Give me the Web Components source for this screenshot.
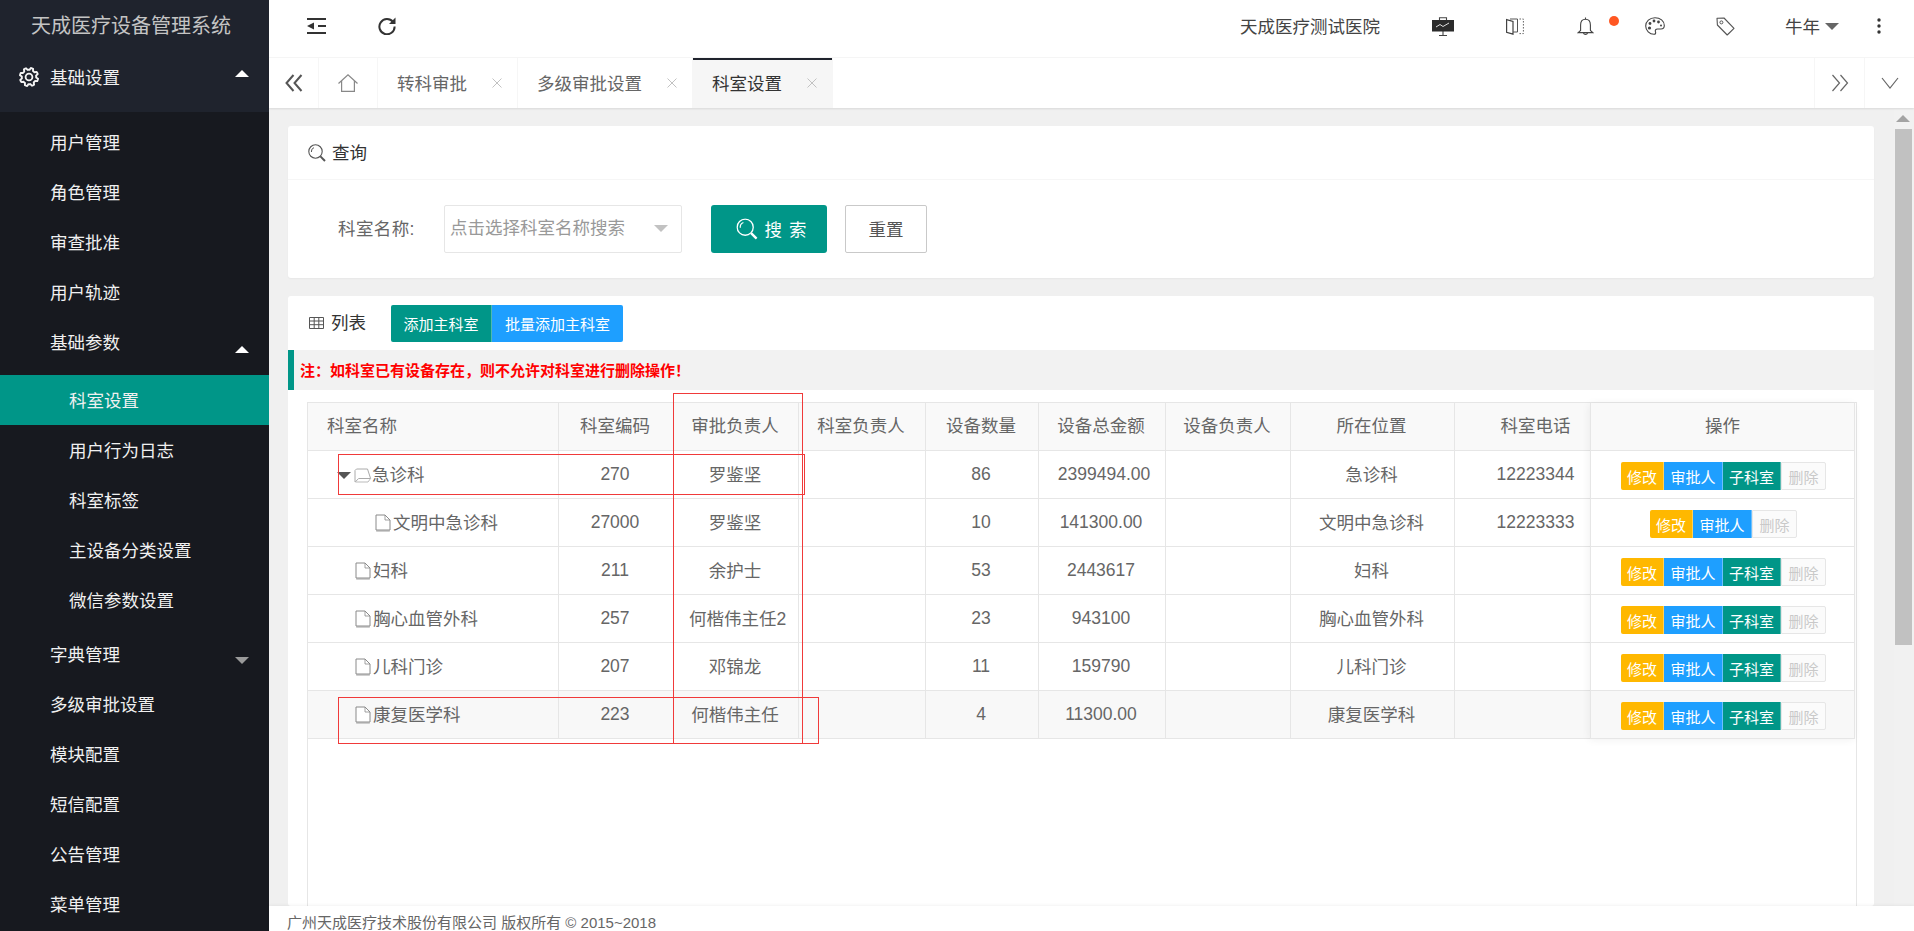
<!DOCTYPE html>
<html lang="zh-CN">
<head>
<meta charset="utf-8">
<title>科室设置</title>
<style>
html, body { margin: 0; height: 100%; overflow: hidden; }
body { font-family: "Liberation Sans", "Noto Sans CJK SC", sans-serif; font-size: 17.5px; color: #666; }
</style>
</head>
<body>
<tc-app>
  <side-nav slot="side">
    <nav-item group arrow="up" icon="gear">基础设置</nav-item>
    <nav-item>用户管理</nav-item>
    <nav-item>角色管理</nav-item>
    <nav-item>审查批准</nav-item>
    <nav-item>用户轨迹</nav-item>
    <nav-item arrow="up">基础参数</nav-item>
    <nav-item sub active>科室设置</nav-item>
    <nav-item sub>用户行为日志</nav-item>
    <nav-item sub>科室标签</nav-item>
    <nav-item sub>主设备分类设置</nav-item>
    <nav-item sub last>微信参数设置</nav-item>
    <nav-item arrow="down">字典管理</nav-item>
    <nav-item>多级审批设置</nav-item>
    <nav-item>模块配置</nav-item>
    <nav-item>短信配置</nav-item>
    <nav-item>公告管理</nav-item>
    <nav-item>菜单管理</nav-item>
  </side-nav>
  <top-bar slot="top"></top-bar>
  <tab-strip slot="tabs">
    <tab-item>转科审批</tab-item>
    <tab-item>多级审批设置</tab-item>
    <tab-item active>科室设置</tab-item>
  </tab-strip>
  <query-card></query-card>
  <list-card>
    <dept-table></dept-table>
  </list-card>
  <page-footer slot="foot">广州天成医疗技术股份有限公司 版权所有 © 2015~2018</page-footer>
</tc-app>

<script>
// 齿轮图标的轮廓，8 个齿
function gearPath() {
  let d = '';
  for (let i = 0; i < 48; i++) {
    const a = i / 48 * Math.PI * 2;
    const tooth = (i % 6) < 3;
    const r = tooth ? 9.2 : 7.2;
    d += (i ? 'L' : 'M') + (10 + r * Math.cos(a + 0.2)).toFixed(2) + ' ' + (10 + r * Math.sin(a + 0.2)).toFixed(2);
  }
  return d + 'Z';
}

const ICONS = {
  shrink: [19, 16, `<path d="M0 1H19M11 8H19M0 15H19" stroke="#333" stroke-width="2"/><path d="M0 8L7 4.5V11.5Z" fill="#333"/>`],
  refresh: [18, 18, `<path d="M15 5A7.6 7.6 0 1 0 16.6 9.6" fill="none" stroke="#333" stroke-width="2"/><path d="M17.5 .5V7H11Z" fill="#333"/>`],
  home: [20, 18, `<path d="M.5 9.5L10 .8L19.5 9.5M3.6 7V17.4H16.4V7" fill="none" stroke="#888" stroke-width="1.2"/>`],
  dleft: [18, 18, `<path d="M8.5 1L1.5 9L8.5 17M16.5 1L9.5 9L16.5 17" fill="none" stroke="#555" stroke-width="2"/>`],
  dright: [18, 18, `<path d="M1.5 1L8.5 9L1.5 17M9.5 1L16.5 9L9.5 17" fill="none" stroke="#666" stroke-width="1.2"/>`],
  down: [18, 12, `<path d="M1 1L9 11L17 1" fill="none" stroke="#666" stroke-width="1.2"/>`],
  close: [10, 10, `<path d="M.5 .5L9.5 9.5M9.5 .5L.5 9.5" stroke="#c2c2c2" stroke-width="1"/>`],
  search: [18, 18, `<circle cx="7.5" cy="7.5" r="6.7" fill="none" stroke="currentColor" stroke-width="1.1"/><path d="M12.4 12.4L17 17" stroke="currentColor" stroke-width="2"/><path d="M3.4 8A4.2 4.2 0 0 1 6 3.6" fill="none" stroke="currentColor" stroke-width="1"/>`],
  table: [15, 12, `<path d="M.5 .5H14.5V11.5H.5ZM.5 4H14.5M.5 7.7H14.5M5.2 .5V11.5M9.8 .5V11.5" fill="none" stroke="#555" stroke-width="1"/>`],
  board: [22, 19, `<path d="M7.5 3V.7H14.5V3M11 14V19M7 18.6H15" fill="none" stroke="#444" stroke-width="1.1"/><rect y="3" width="22" height="11.5" fill="#2b2b2b"/><path d="M4 10L8 7.5L11 9.5L17 6" fill="none" stroke="#ddd" stroke-width="1"/>`],
  book: [18, 17, `<path d="M.6 1.6L7 3.4V16.2L.6 14.4Z" fill="none" stroke="#444" stroke-width="1.2"/><path d="M4 1H11.5V14H7" fill="none" stroke="#555" stroke-width="1"/><path d="M13.5 1H17.4V15.6H12" fill="none" stroke="#555" stroke-width="1" stroke-dasharray="1.4 1.6"/>`],
  bell: [17, 19, `<path d="M8.5 2.2C5 2.2 3.6 4.6 3.6 8V13.5L1.2 15.6H15.8L13.4 13.5V8C13.4 4.6 12 2.2 8.5 2.2Z" fill="none" stroke="#444" stroke-width="1.1"/><path d="M8.5 .4V2.2M6.4 15.8A2.2 2.2 0 0 0 10.6 15.8" fill="none" stroke="#444" stroke-width="1.1"/>`],
  palette: [20, 18, `<path d="M10 .7C4.6 .7 .7 4.5 .7 9C.7 13.5 4.6 17.3 9 17.3C10.5 17.3 11 16.2 10.5 15C9.8 13.4 10.7 12 12.5 12H16C18 12 19.3 10.8 19.3 8.5C19.3 4 15.2 .7 10 .7Z" fill="none" stroke="#444" stroke-width="1.1"/><circle cx="5" cy="6.5" r="1.4" fill="#444"/><circle cx="9" cy="4" r="1.4" fill="#444"/><circle cx="13.5" cy="5" r="1.4" fill="#444"/><circle cx="4.5" cy="11" r="1.6" fill="#444"/><circle cx="16" cy="8.4" r="1" fill="#444"/>`],
  tag: [19, 19, `<path d="M1 1.3L8 1L18 11.3L11.2 18L1.4 8Z" fill="none" stroke="#555" stroke-width="1.1" stroke-linejoin="round"/><circle cx="5.4" cy="5.4" r="1.5" fill="none" stroke="#555"/>`],
  kebab: [4, 16, `<circle cx="2" cy="2" r="1.7" fill="#333"/><circle cx="2" cy="8" r="1.7" fill="#333"/><circle cx="2" cy="14" r="1.7" fill="#333"/>`],
  file: [16, 18, `<path d="M1.2 17H14.8" stroke="#bbb" stroke-width="1.4"/><path d="M1 1H10L15 6V16H1Z" fill="#fff" stroke="#8a8a8a"/><path d="M10 1V6H15" fill="none" stroke="#8a8a8a" stroke-width=".8"/>`],
  folder: [18, 15, `<path d="M1 14V2.5L2.5 1H13.5L16.6 10.5H4.6L1.2 14Z" fill="#fff" stroke="#aaa"/><path d="M1.6 14H14L16.6 10.5" fill="none" stroke="#bbb"/>`],
  gear: [20, 20, `<path d="${gearPath()}" fill="none" stroke="#f4f4f4" stroke-width="1.9" stroke-linejoin="round"/><circle cx="10" cy="10" r="3.4" fill="none" stroke="#f4f4f4" stroke-width="1.8"/>`]
};

class TcIcon extends HTMLElement {
  connectedCallback() {
    const [w, h, body] = ICONS[this.getAttribute('name')];
    this.attachShadow({ mode: 'open' });
    this.shadowRoot.innerHTML = `
      <style>:host { display: inline-flex; flex: none; width: ${w}px; height: ${h}px; } svg { display: block; }</style>
      <svg width="${w}" height="${h}" viewBox="0 0 ${w} ${h}">${body}</svg>`;
  }
}
customElements.define('tc-icon', TcIcon);

class TcApp extends HTMLElement {
  constructor() {
    super();
    this.attachShadow({ mode: 'open' });
    this.shadowRoot.innerHTML = `
      <style>
        :host { display: grid; grid-template-columns: 269px 1fr; height: 931px; overflow: hidden; }
        .main { display: flex; flex-direction: column; min-width: 0; height: 931px; }
        .body { flex: 1; min-height: 0; display: flex; background: #f0f0f0; }
        .pane { flex: 1; min-width: 0; display: flex; flex-direction: column; gap: 18px; padding: 18px 20px 0 19px; overflow: hidden; }
        .track { flex: none; width: 20px; background: #f1f1f1; }
        .arrow { height: 21px; display: flex; justify-content: center; align-items: center; padding-right: 2px; }
        .arrow i { border: 7px solid transparent; border-top: 0; border-bottom: 7px solid #a3a3a3; }
        .thumb { width: 17px; height: 516px; margin-left: 1px; background: #c1c1c1; }
      </style>
      <slot name="side"></slot>
      <div class="main">
        <slot name="top"></slot>
        <slot name="tabs"></slot>
        <div class="body">
          <div class="pane"><slot></slot></div>
          <div class="track"><div class="arrow"><i></i></div><div class="thumb"></div></div>
        </div>
        <slot name="foot"></slot>
      </div>`;
  }
}
customElements.define('tc-app', TcApp);

class SideNav extends HTMLElement {
  constructor() {
    super();
    this.attachShadow({ mode: 'open' });
    this.shadowRoot.innerHTML = `
      <style>
        :host { display: block; background: #17191f; height: 931px; overflow: hidden; }
        .logo { height: 57px; background: #1f232d; color: #c4c4c4; font-size: 20px; line-height: 53px; text-align: center; padding-right: 7px; box-sizing: border-box; }
      </style>
      <div class="logo">天成医疗设备管理系统</div>
      <slot></slot>`;
  }
}
customElements.define('side-nav', SideNav);

class NavItem extends HTMLElement {
  constructor() {
    super();
    this.attachShadow({ mode: 'open' });
    const arrow = this.getAttribute('arrow');
    const icon = this.getAttribute('icon');
    this.shadowRoot.innerHTML = `
      <style>
        :host { display: block; color: #f0f0f0; }
        :host([group]) { background: #1f232d; margin-bottom: 5px; }
        :host([arrow="up"]:not([group])) { margin-bottom: 8px; }
        :host([last]) { margin-bottom: 4px; }
        .row { height: 50px; box-sizing: border-box; display: flex; align-items: center; padding: 0 0 2px 50px; position: relative; }
        :host([group]) .row { height: 55px; padding: 0 0 17px 19px; gap: 11px; }
        :host([group]) tc-icon { margin-top: 2px; }
        :host([sub]) .row { padding-left: 69px; }
        :host([active]) .row { background: #009688; }
        .tri { position: absolute; left: 235px; border: 7.5px solid transparent; }
        .up { top: 29px; border-top: 0; border-bottom: 7.5px solid #fff; }
        :host([group]) .up { top: 13px; }
        .down { top: 28px; border-bottom: 0; border-top: 7.5px solid #9a9a9a; }
      </style>
      <div class="row">
        ${icon ? `<tc-icon name="${icon}"></tc-icon>` : ''}
        <slot></slot>
        ${arrow ? `<i class="tri ${arrow}"></i>` : ''}
      </div>`;
  }
}
customElements.define('nav-item', NavItem);

class TopBar extends HTMLElement {
  constructor() {
    super();
    this.attachShadow({ mode: 'open' });
    this.shadowRoot.innerHTML = `
      <style>
        :host { display: flex; align-items: center; background: #fff; border-bottom: 1px solid #f6f6f6; color: #444; flex: none; padding-bottom: 5px; height: 52px; }
        .spacer { flex: 1; }
        span { padding-bottom: 2px; }
        .bell { position: relative; display: flex; }
        .dot { position: absolute; left: 32px; top: -1px; width: 10px; height: 10px; border-radius: 50%; background: #ff5722; }
        .caret { width: 0; border: 7.5px solid transparent; border-bottom: 0; border-top: 7.5px solid #666; margin-left: 5px; margin-right: 1px; }
      </style>
      <tc-icon name="shrink" style="margin-left:38px"></tc-icon>
      <tc-icon name="refresh" style="margin-left:52px"></tc-icon>
      <div class="spacer"></div>
      <span>天成医疗测试医院</span>
      <tc-icon name="board" style="margin-left:52px"></tc-icon>
      <tc-icon name="book" style="margin-left:52px"></tc-icon>
      <div class="bell" style="margin-left:53px"><tc-icon name="bell"></tc-icon><i class="dot"></i></div>
      <tc-icon name="palette" style="margin-left:51px"></tc-icon>
      <tc-icon name="tag" style="margin-left:51px"></tc-icon>
      <span style="margin-left:50px">牛年</span><i class="caret"></i>
      <tc-icon name="kebab" style="margin-left:37px;margin-right:33px"></tc-icon>`;
  }
}
customElements.define('top-bar', TopBar);

class TabStrip extends HTMLElement {
  constructor() {
    super();
    this.attachShadow({ mode: 'open' });
    this.shadowRoot.innerHTML = `
      <style>
        :host { display: flex; height: 50px; background: #fff; box-shadow: 0 1px 2px rgba(0,0,0,.1); position: relative; z-index: 1; flex: none; }
        .cell { display: flex; align-items: center; justify-content: center; box-sizing: border-box; border-right: 1px solid #f6f6f6; }
        .cell.r { border-right: 0; border-left: 1px solid #f6f6f6; width: 50px; }
        .tabs { display: flex; flex: 1; }
      </style>
      <div class="cell" style="width:50px"><tc-icon name="dleft"></tc-icon></div>
      <div class="cell" style="width:59px"><tc-icon name="home"></tc-icon></div>
      <div class="tabs"><slot></slot></div>
      <div class="cell r"><tc-icon name="dright"></tc-icon></div>
      <div class="cell r"><tc-icon name="down"></tc-icon></div>`;
  }
}
customElements.define('tab-strip', TabStrip);

class TabItem extends HTMLElement {
  constructor() {
    super();
    this.attachShadow({ mode: 'open' });
    this.shadowRoot.innerHTML = `
      <style>
        :host { display: flex; align-items: center; padding: 0 15px 2px 19px; border-right: 1px solid #f6f6f6; color: #666; }
        :host([active]) { background: #f6f6f6; color: #333; box-shadow: inset 0 2px 0 #1f232d; }
        tc-icon { margin: 2px 0 0 25px; }
      </style>
      <slot></slot><tc-icon name="close"></tc-icon>`;
  }
}
customElements.define('tab-item', TabItem);

class QueryCard extends HTMLElement {
  constructor() {
    super();
    this.attachShadow({ mode: 'open' });
    this.shadowRoot.innerHTML = `
      <style>
        :host { display: block; flex: none; background: #fff; border-radius: 3px; height: 152px; box-sizing: border-box; box-shadow: 0 1px 2px rgba(0,0,0,.04); }
        .head { border-bottom: 1px solid #f6f6f6; display: flex; align-items: center; padding: 0 0 2px 20px; gap: 6px; color: #333; height: 51px; }
        .head tc-icon { color: #555; margin-top: 2px; }
        .form { display: flex; align-items: center; padding: 25px 0 0 50px; }
        label { width: 106px; color: #666; padding-bottom: 4px; letter-spacing: .4px; }
        .sel { box-sizing: border-box; width: 238px; height: 48px; border: 1px solid #e6e6e6; border-radius: 2px; display: flex; align-items: center; padding: 0 13px 5px 5px; color: #999; justify-content: space-between; }
        .sel i { border: 7.5px solid transparent; border-bottom: 0; border-top: 7.5px solid #c2c2c2; margin-top: 4px; }
        .go { margin-left: 29px; box-sizing: border-box; width: 116px; height: 48px; background: #009688; color: #fff; border-radius: 3px; display: flex; align-items: center; justify-content: center; gap: 9px; padding: 0 0 2px 7px; }
        .go tc-icon { transform: scale(1.2); margin-top: 2px; }
        .go span { letter-spacing: 1px; }
        .reset { margin-left: 18px; box-sizing: border-box; width: 82px; height: 48px; border: 1px solid #c9c9c9; border-radius: 2px; display: flex; align-items: center; justify-content: center; color: #555; padding-bottom: 2px; }
      </style>
      <div class="head"><tc-icon name="search"></tc-icon>查询</div>
      <div class="form">
        <label>科室名称:</label>
        <div class="sel">点击选择科室名称搜索<i></i></div>
        <div class="go"><tc-icon name="search"></tc-icon><span>搜 索</span></div>
        <div class="reset">重置</div>
      </div>`;
  }
}
customElements.define('query-card', QueryCard);

class ListCard extends HTMLElement {
  constructor() {
    super();
    this.attachShadow({ mode: 'open' });
    this.shadowRoot.innerHTML = `
      <style>
        :host { display: flex; flex-direction: column; flex: 1; min-height: 0; background: #fff; border-radius: 3px; }
        .head { height: 54px; box-sizing: border-box; padding: 9px 0 8px 21px; display: flex; align-items: flex-start; color: #333; }
        .title { display: flex; align-items: center; height: 34px; gap: 7px; width: 82px; }
        .title tc-icon { margin-top: 2px; }
        .btn { height: 37px; display: flex; align-items: center; justify-content: center; color: #fff; font-size: 15px; }
        .b1 { width: 101px; background: #009688; border-radius: 2px 0 0 2px; border-right: 1px solid #4fb9ae; box-sizing: border-box; }
        .b2 { width: 131px; background: #1e9fff; border-radius: 0 2px 2px 0; }
        .note { height: 40px; box-sizing: border-box; background: #f2f2f2; border-left: 6px solid #009688; display: flex; align-items: center; padding: 0 0 2px 6px; color: #f00; font-weight: bold; font-size: 15px; }
        .wrap { flex: 1; min-height: 0; padding: 12px 17px 0 19px; display: flex; }
      </style>
      <div class="head">
        <div class="title"><tc-icon name="table"></tc-icon><span style="padding-bottom:2px">列表</span></div>
        <div class="btn b1">添加主科室</div><div class="btn b2">批量添加主科室</div>
      </div>
      <div class="note">注：如科室已有设备存在，则不允许对科室进行删除操作！</div>
      <div class="wrap"><slot></slot></div>`;
  }
}
customElements.define('list-card', ListCard);

class RowActions extends HTMLElement {
  constructor() {
    super();
    this.attachShadow({ mode: 'open' });
    const noChild = this.hasAttribute('no-child');
    this.shadowRoot.innerHTML = `
      <style>
        :host { display: inline-flex; font-size: 15px; color: #fff; height: 28px; vertical-align: middle; margin-top: 2px; }
        span { display: flex; align-items: center; justify-content: center; box-sizing: border-box; height: 28px; padding-top: 1px; border-right: 1px solid rgba(255,255,255,.35); }
        .e { width: 43px; background: #ffb800; border-radius: 2px 0 0 2px; }
        .a { width: 59px; background: #1e9fff; }
        .c { width: 58px; background: #009688; }
        .d { width: 45px; background: #fbfbfb; border: 1px solid #e6e6e6; color: #c9c9c9; border-radius: 0 2px 2px 0; }
      </style>
      <span class="e">修改</span><span class="a">审批人</span>${noChild ? '' : '<span class="c">子科室</span>'}<span class="d">删除</span>`;
  }
}
customElements.define('row-actions', RowActions);

class MarkBox extends HTMLElement {
  connectedCallback() {
    const [x, y, w, h] = this.getAttribute('box').split(',');
    this.attachShadow({ mode: 'open' });
    this.shadowRoot.innerHTML = `<style>:host { position: absolute; left: ${x}px; top: ${y}px; width: ${w}px; height: ${h}px; border: 1px solid #f03a3a; box-sizing: border-box; pointer-events: none; z-index: 3; }</style>`;
  }
}
customElements.define('mark-box', MarkBox);

const COLS = [251, 115, 125, 127, 113, 127, 125, 164, 135];
const HEAD = ['科室名称', '科室编码', '审批负责人', '科室负责人', '设备数量', '设备总金额', '设备负责人', '所在位置', '科室电话'];
const ROWS = [
  { name: '急诊科', open: true, vals: ['270', '罗鉴坚', '', '86', '2399494.00', '', '急诊科', '12223344'] },
  { name: '文明中急诊科', child: true, noChild: true, vals: ['27000', '罗鉴坚', '', '10', '141300.00', '', '文明中急诊科', '12223333'] },
  { name: '妇科', vals: ['211', '余护士', '', '53', '2443617', '', '妇科', ''] },
  { name: '胸心血管外科', vals: ['257', '何楷伟主任2', '', '23', '943100', '', '胸心血管外科', ''] },
  { name: '儿科门诊', vals: ['207', '邓锦龙', '', '11', '159790', '', '儿科门诊', ''] },
  { name: '康复医学科', hover: true, vals: ['223', '何楷伟主任', '', '4', '11300.00', '', '康复医学科', ''] }
];

class DeptTable extends HTMLElement {
  constructor() {
    super();
    this.attachShadow({ mode: 'open' });
    const cell = (v, i) => {
      let cls = i === 7 ? 'tel' : '';
      if (/^[\d.]+$/.test(v)) cls += ' num';
      if (v === '2399494.00') cls += ' wide';
      if (v === '何楷伟主任2') cls += ' wide2';
      return `<td class="${cls}"><span>${v}</span></td>`;
    };
    const nameCell = r => `
      <td class="name ${r.child ? 'child' : ''}">
        <div>
          ${r.open ? '<i class="tw"></i>' : ''}
          <tc-icon name="${r.open ? 'folder' : 'file'}" class="${r.open ? 'fd' : ''}"></tc-icon><span>${r.name}</span>
        </div>
      </td>`;
    this.shadowRoot.innerHTML = `
      <style>
        :host { display: flex; flex: 1; position: relative; height: 600px; border: 1px solid #e6e6e6; border-bottom: 0; box-sizing: border-box; color: #666; align-items: flex-start; background: #fff; }
        table { border-collapse: separate; border-spacing: 0; table-layout: fixed; }
        th, td { box-sizing: border-box; height: 48px; padding: 0 2px 0 0; border-right: 1px solid #e6e6e6; border-bottom: 1px solid #e6e6e6; text-align: center; font-weight: normal; white-space: nowrap; overflow: hidden; }
        th { background: #f9f9f9; padding-bottom: 5px; }
        td { padding-bottom: 3px; }
        td.num { padding-bottom: 1px; }
        th:first-child { text-align: left; padding-left: 19px; }
        tr.hover td { background: #f8f8f8; }
        .tel { padding-left: 28px; }
        .wide { padding-left: 6px; }
        .wide2 { text-align: left; padding-left: 15px; overflow: visible; }
        .name div { display: flex; align-items: center; padding-left: 47px; position: relative; }
        .name tc-icon { margin: 4px 2px 0 0; }
        .name tc-icon.fd { margin: 4px 0 0 -1px; }
        .name.child div { padding-left: 67px; }
        .tw { position: absolute; left: 29px; top: 11px; border: 7px solid transparent; border-bottom: 0; border-top: 7px solid #555; }
        .main th:last-child, .main td:last-child { border-right: 0; }
        .fixed { position: relative; z-index: 2; background: #fff; box-shadow: -1px 1px 8px rgba(0,0,0,.06); border-left: 1px solid #e6e6e6; }
        .fixed th { padding-right: 0; }
        .fixed td { padding: 0 0 0 2px; }
      </style>
      <table class="main" style="width:${COLS.reduce((a, b) => a + b)}px">
        <colgroup>${COLS.map(c => `<col style="width:${c}px">`).join('')}</colgroup>
        <tr>${HEAD.map((h, i) => `<th class="${i === 8 ? 'tel' : ''}">${h}</th>`).join('')}</tr>
        ${ROWS.map(r => `<tr class="${r.hover ? 'hover' : ''}">${nameCell(r)}${r.vals.map(cell).join('')}</tr>`).join('')}
      </table>
      <table class="fixed" style="width:265px">
        <tr><th style="text-align:center;padding-left:0">操作</th></tr>
        ${ROWS.map(r => `<tr class="${r.hover ? 'hover' : ''}"><td><row-actions ${r.noChild ? 'no-child' : ''}></row-actions></td></tr>`).join('')}
      </table>
      <mark-box box="365,-10,130,351"></mark-box>
      <mark-box box="30,51,467,41"></mark-box>
      <mark-box box="30,294,481,47"></mark-box>`;
  }
}
customElements.define('dept-table', DeptTable);

class PageFooter extends HTMLElement {
  constructor() {
    super();
    this.attachShadow({ mode: 'open' });
    this.shadowRoot.innerHTML = `
      <style>
        :host { display: block; flex: none; height: 25px; box-sizing: border-box; background: #fff; padding: 7px 0 0 18px; font-size: 15px; line-height: 20px; color: #666; box-shadow: 0 -1px 3px rgba(0,0,0,.05); position: relative; z-index: 4; }
      </style>
      <slot></slot>`;
  }
}
customElements.define('page-footer', PageFooter);
</script>
</body>
</html>
